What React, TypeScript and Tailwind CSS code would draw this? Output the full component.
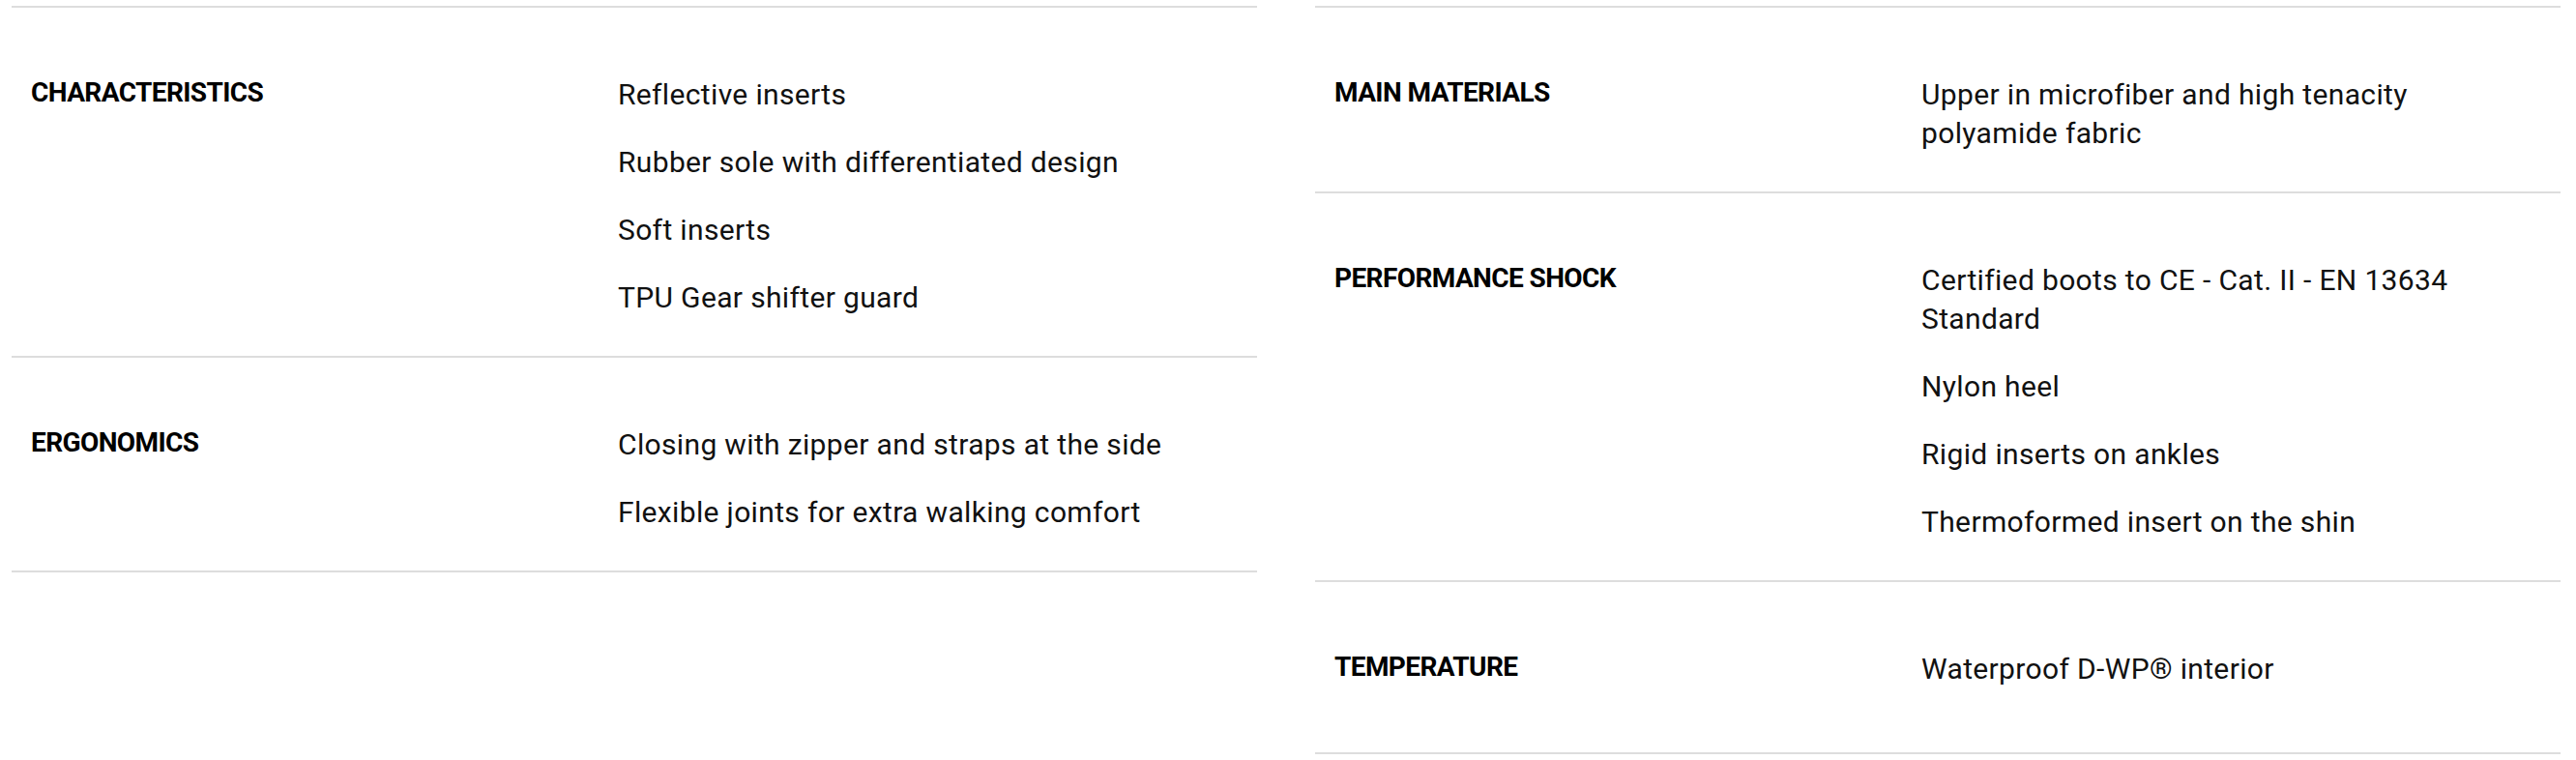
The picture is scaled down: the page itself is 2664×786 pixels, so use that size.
const left = [
  {
    label: "CHARACTERISTICS",
    values: ["Reflective inserts", "Rubber sole with differentiated design", "Soft inserts", "TPU Gear shifter guard"],
  },
  {
    label: "ERGONOMICS",
    values: ["Closing with zipper and straps at the side", "Flexible joints for extra walking comfort"],
  },
];

const right = [
  {
    label: "MAIN MATERIALS",
    values: ["Upper in microfiber and high tenacity polyamide fabric"],
  },
  {
    label: "PERFORMANCE SHOCK",
    values: [
      "Certified boots to CE - Cat. II - EN 13634 Standard",
      "Nylon heel",
      "Rigid inserts on ankles",
      "Thermoformed insert on the shin",
    ],
  },
  {
    label: "TEMPERATURE",
    values: ["Waterproof D-WP® interior"],
  },
];

type Spec = { label: string; values: string[] };

function SpecRow({ spec }: { spec: Spec }) {
  return (
    <div className="flex items-start border-b-2 border-[#dddddd] pt-[70px] pb-[40px]">
      <h3 className="w-[627px] shrink-0 pl-[20px] min-h-[66px] text-[28px] leading-[36px] font-bold tracking-[-0.6px] text-black">
        {spec.label}
      </h3>
      <ul className="w-[600px] flex flex-col gap-[30px]">
        {spec.values.map((v) => (
          <li key={v} className="text-[30px] leading-[40px] tracking-[0.35px] text-[#111111]">
            {v}
          </li>
        ))}
      </ul>
    </div>
  );
}

function SpecColumn({ specs }: { specs: Spec[] }) {
  return (
    <div className="border-t-2 border-[#dddddd]">
      {specs.map((s) => (
        <SpecRow key={s.label} spec={s} />
      ))}
    </div>
  );
}

export default function App() {
  return (
    <div
      className="min-h-screen bg-white pt-[6px] pl-[12px] pr-[16px]"
      style={{ fontFamily: "Roboto, 'Liberation Sans', sans-serif" }}
    >
      <div className="grid grid-cols-2 items-start gap-x-[60px]">
        <SpecColumn specs={left} />
        <SpecColumn specs={right} />
      </div>
    </div>
  );
}
